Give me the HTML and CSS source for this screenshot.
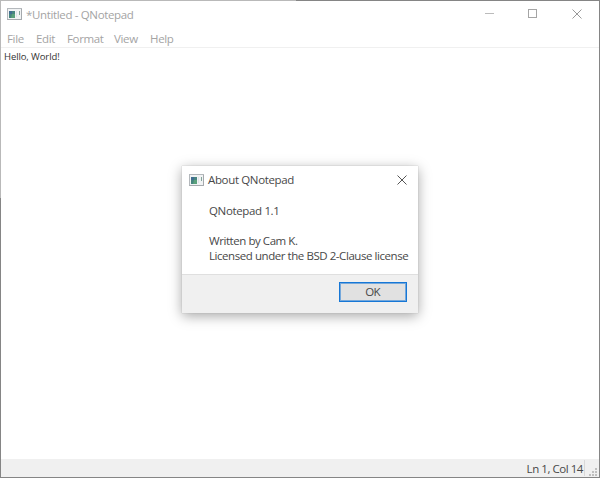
FILE: index.html
```html
<!DOCTYPE html>
<html lang="en">
<head>
<meta charset="utf-8">
<title>*Untitled - QNotepad</title>
<link rel="stylesheet" href="styles.css">
</head>
<body>
<div class="window">
  <header class="titlebar">
    <svg class="app-icon" width="15" height="12" viewBox="0 0 15 12"><rect x=".5" y=".5" width="14" height="11" fill="#f1f3f4" stroke="#b4b8bc"/><path d="M.5 11.5h14V1" fill="none" stroke="#a5a9ad"/><rect x="2" y="3" width="6" height="7" fill="#47857f"/><path d="M2 3h3v3H2z" fill="#416e91"/><path d="M5 6h3v4H4z" fill="#5aa17b"/><path d="M9.5 3v6" stroke="#dde3e8"/><path d="M12.5 3v4" stroke="#83a59a"/></svg>
    <h1 class="title">*Untitled - QNotepad</h1>
    <div class="controls">
      <svg class="control" width="44" height="28" viewBox="0 0 44 28"><path d="M18 12.5h9" stroke="#bbb"/></svg>
      <svg class="control" width="44" height="28" viewBox="0 0 44 28"><rect x="17.5" y="8.5" width="8" height="8" fill="none" stroke="#a5a5a5"/></svg>
      <svg class="control" width="44" height="28" viewBox="0 0 44 28"><path d="M17.5 8.5l9 9m0-9l-9 9" stroke="#999"/></svg>
    </div>
  </header>
  <nav class="menubar"><span class="m-file">File</span><span class="m-edit">Edit</span><span class="m-format">Format</span><span class="m-view">View</span><span class="m-help">Help</span></nav>
  <main class="editor">Hello, World!</main>
  <footer class="statusbar">
    <span class="position">Ln 1, Col 14</span>
    <svg class="grip" width="9" height="9" viewBox="0 0 9 9" fill="#bfbfbf"><path d="M6 0h2v2H6zM3 3h2v2H3zM6 3h2v2H6zM0 6h2v2H0zM3 6h2v2H3zM6 6h2v2H6z"/></svg>
  </footer>
</div>
<section class="dialog" role="dialog">
  <header class="dialog-title">
    <svg class="app-icon" width="15" height="12" viewBox="0 0 15 12"><rect x=".5" y=".5" width="14" height="11" fill="#f1f3f4" stroke="#b4b8bc"/><path d="M.5 11.5h14V1" fill="none" stroke="#a5a9ad"/><rect x="2" y="3" width="6" height="7" fill="#47857f"/><path d="M2 3h3v3H2z" fill="#416e91"/><path d="M5 6h3v4H4z" fill="#5aa17b"/><path d="M9.5 3v6" stroke="#dde3e8"/><path d="M12.5 3v4" stroke="#83a59a"/></svg>
    <h2 class="about">About QNotepad</h2>
    <svg class="close" width="10" height="10" viewBox="0 0 10 10"><path d="M.5.5l9 9m0-9l-9 9" stroke="#555"/></svg>
  </header>
  <div class="message"><p class="version">QNotepad 1.1</p><p class="author">Written by Cam K.</p><p class="license">Licensed under the BSD 2-Clause license</p></div>
  <footer class="actions"><button class="ok">OK</button></footer>
</section>
</body>
</html>
```
FILE: styles.css
```css
* { box-sizing: border-box; }
body { margin: 0; width: 600px; height: 478px; overflow: hidden; font: 11.5px/15px "Open Sans", "Noto Sans", sans-serif; letter-spacing: -.35px; color: #484848; background: #fff; }
h1, h2, p { margin: 0; font-size: inherit; font-weight: 400; white-space: nowrap; }
.window { display: flex; flex-direction: column; height: 478px; border: 1px solid #858585; border-left-width: 0; border-top-width: 0; padding: 1px 0 0 1px;
  background: linear-gradient(90deg, #b9b9b9 296px, #858585 296px) 0 0 / 100% 1px no-repeat, linear-gradient(#b9b9b9 198px, #858585 198px) 0 0 / 1px 100% no-repeat, #fff; }
.titlebar { display: flex; height: 28px; flex: none; color: #a4a4a4; }
.titlebar .app-icon { margin: 7px 4px 0 6px; }
.title { line-height: 27px; }
.controls { display: flex; margin-left: auto; }
.menubar { display: flex; height: 19px; flex: none; border-bottom: 1px solid #f0f0f0; color: #a4a4a4; line-height: 19px; padding-left: 6px; }
.menubar span { flex: none; white-space: nowrap; }
.m-file { width: 29px; }
.m-edit { width: 31px; }
.m-format { width: 47px; }
.m-view { width: 36px; }
.editor { flex: 1; padding: 1px 3px; font-size: 9.5px; color: #333; letter-spacing: -.1px; }
.statusbar { display: flex; flex: none; height: 18px; background: #f0f0f0; justify-content: flex-end; }
.position { border-right: 1px solid #d9d9d9; line-height: 17px; height: 16px; margin-top: 1px; padding-right: 1px; letter-spacing: -.45px; }
.grip { margin: 9px 1px 0 4px; }
.dialog { position: absolute; left: 182px; top: 166px; width: 236px; height: 147px; background: #fff; box-shadow: 0 0 1px #aaa, 0 3px 12px rgba(0, 0, 0, .35); display: flex; flex-direction: column; }
.dialog-title { display: flex; height: 28px; }
.dialog-title .app-icon { margin: 8px 4px 0 7px; }
.about { line-height: 28px; }
.close { margin: 9px 11px 0 auto; }
.message { padding: 9px 0 0 27px; flex: 1; }
.version { margin-bottom: 15px; }
.author, .license { letter-spacing: -.44px; }
.actions { height: 39px; background: #f0f0f0; border-top: 1px solid #dfdfdf; display: flex; justify-content: flex-end; padding: 7px 11px 0 0; }
.ok { width: 68px; height: 20px; border: 1px solid #1677d6; outline: 1px solid #1677d688; outline-offset: -2px; background: #e1e1e1; padding: 0 1px 1px 0; font: inherit; letter-spacing: -.7px; color: #484848; }
```
